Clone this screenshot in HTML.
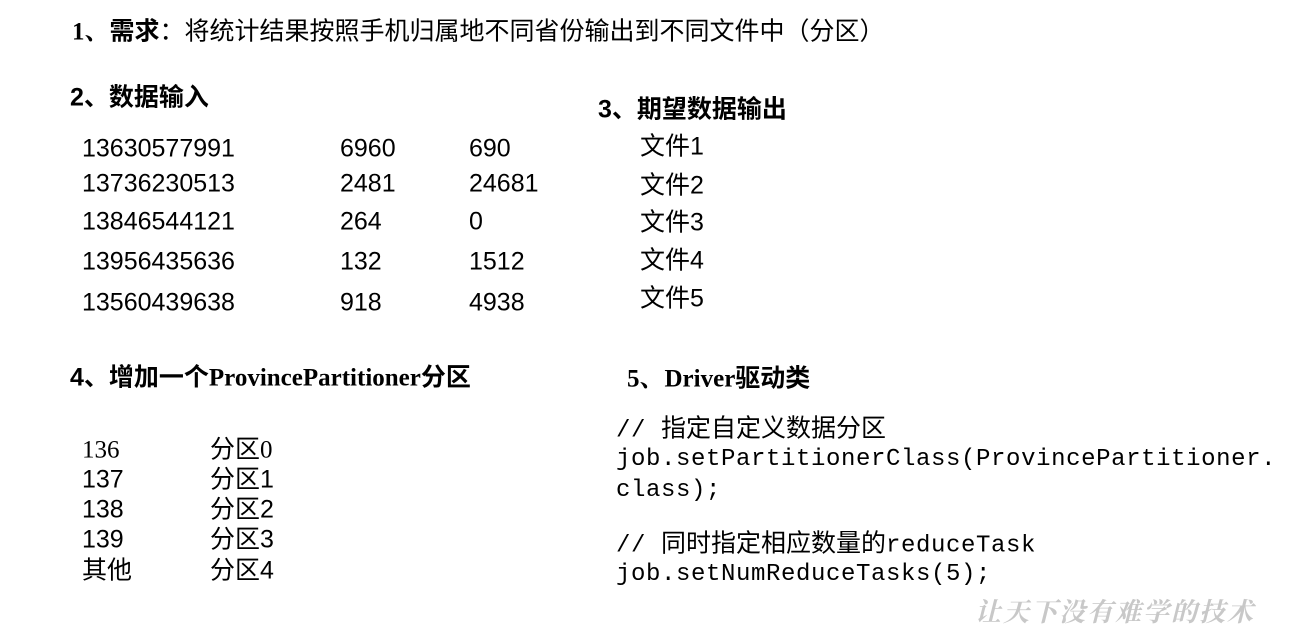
<!DOCTYPE html>
<html><head><meta charset="utf-8"><style>
body{margin:0;width:1297px;height:644px;background:#fff;position:relative;overflow:hidden;font-family:"Liberation Sans","Noto Sans CJK SC",sans-serif;color:#000}
.t{position:absolute;white-space:nowrap;line-height:1;transform:translateY(-50%)}
.b{font-weight:bold}
.s{font-size:25px}
.m{font-family:"Liberation Mono","Noto Sans CJK SC",monospace;font-size:24px;letter-spacing:0.6px}
.m span{font-family:"Liberation Sans","Noto Sans CJK SC",sans-serif;letter-spacing:0;font-size:25px}
.sf{font-family:"Liberation Serif","Noto Serif CJK SC",serif}
</style></head><body>
<div class="t s" style="left:72px;top:32px"><b class="sf">1、</b><b>需求</b>：将统计结果按照手机归属地不同省份输出到不同文件中（分区）</div>
<div class="t s b" style="left:70px;top:98px">2、数据输入</div>
<div class="t s b" style="left:598px;top:110px">3、期望数据输出</div>

<div class="t s" style="left:82px;top:149px">13630577991</div><div class="t s" style="left:340px;top:149px">6960</div><div class="t s" style="left:469px;top:149px">690</div>
<div class="t s" style="left:82px;top:184px">13736230513</div><div class="t s" style="left:340px;top:184px">2481</div><div class="t s" style="left:469px;top:184px">24681</div>
<div class="t s" style="left:82px;top:222px">13846544121</div><div class="t s" style="left:340px;top:222px">264</div><div class="t s" style="left:469px;top:222px">0</div>
<div class="t s" style="left:82px;top:262px">13956435636</div><div class="t s" style="left:340px;top:262px">132</div><div class="t s" style="left:469px;top:262px">1512</div>
<div class="t s" style="left:82px;top:303px">13560439638</div><div class="t s" style="left:340px;top:303px">918</div><div class="t s" style="left:469px;top:303px">4938</div>

<div class="t s" style="left:640px;top:147px">文件1</div>
<div class="t s" style="left:640px;top:186px">文件2</div>
<div class="t s" style="left:640px;top:223px">文件3</div>
<div class="t s" style="left:640px;top:261px">文件4</div>
<div class="t s" style="left:640px;top:299px">文件5</div>

<div class="t s b" style="left:70px;top:378px">4、增加一个<span class="sf">ProvincePartitioner</span>分区</div>
<div class="t s b" style="left:627px;top:379px"><span class="sf">5、Driver</span>驱动类</div>

<div class="t s sf" style="left:82px;top:450px">136</div><div class="t s" style="left:210px;top:450px">分区<span class="sf">0</span></div>
<div class="t s" style="left:82px;top:480px">137</div><div class="t s" style="left:210px;top:480px">分区1</div>
<div class="t s" style="left:82px;top:510px">138</div><div class="t s" style="left:210px;top:510px">分区2</div>
<div class="t s" style="left:82px;top:540px">139</div><div class="t s" style="left:210px;top:540px">分区3</div>
<div class="t s" style="left:82px;top:571px">其他</div><div class="t s" style="left:210px;top:571px">分区4</div>

<div class="t m" style="left:616px;top:430px">// <span>指定自定义数据分区</span></div>
<div class="t m" style="left:616px;top:460px">job.setPartitionerClass(ProvincePartitioner.</div>
<div class="t m" style="left:616px;top:491px">class);</div>
<div class="t m" style="left:616px;top:545px">// <span>同时指定相应数量的</span>reduceTask</div>
<div class="t m" style="left:616px;top:575px">job.setNumReduceTasks(5);</div>

<div class="t" style="left:975px;top:611px;font-size:26px;color:#c8c8c8;font-style:italic;font-weight:bold;letter-spacing:2px;font-family:'Noto Serif CJK SC',serif">让天下没有难学的技术</div>
</body></html>
